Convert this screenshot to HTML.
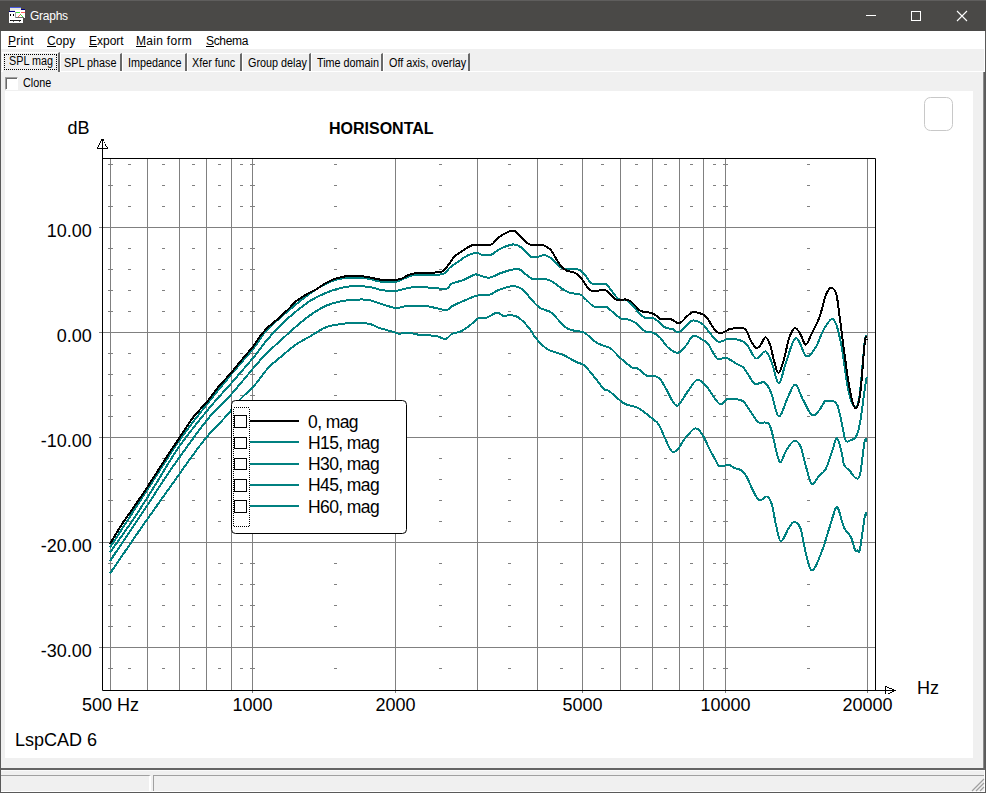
<!DOCTYPE html>
<html><head><meta charset="utf-8">
<style>
*{margin:0;padding:0;box-sizing:border-box}
html,body{width:986px;height:793px;overflow:hidden;background:#f0f0f0;font-family:"Liberation Sans",sans-serif;position:relative}
.a{position:absolute}
#title{left:0;top:0;width:986px;height:31px;background:#4a4947;border-top:1px solid #5f5e5d}
#title .t{left:30px;top:8px;color:#fff;font-size:12px;letter-spacing:-0.25px;line-height:14px}
#menu{left:1px;top:31px;width:984px;height:18px;background:#fff}
#menu span{position:absolute;top:3px;font-size:12px;line-height:14px;color:#000}
#menu u{text-decoration:none;border-bottom:1px solid #000;display:inline-block;line-height:10px}
.tab{position:absolute;font-size:12px;line-height:14px;color:#000;white-space:nowrap;transform:scaleX(0.9);transform-origin:0 0}
.tabb{position:absolute;background:#f0f0f0}
svg text{font-family:"Liberation Sans",sans-serif;fill:#000}
</style></head><body>
<div class="a" id="title">
  <svg class="a" style="left:0;top:-1px" width="30" height="30" shape-rendering="crispEdges"><rect x="10" y="7" width="11" height="1" fill="#4a5ae0"/><rect x="10" y="8" width="11" height="3" fill="#e6e6de"/><rect x="15" y="10" width="10" height="8" fill="#ffffff"/><rect x="21" y="9" width="4" height="1" fill="#000080"/><rect x="16" y="12" width="4" height="1" fill="#40e040"/><rect x="21" y="12" width="4" height="1" fill="#ff6060"/><rect x="18" y="16" width="1" height="1" fill="#ff6060"/><rect x="19" y="15" width="1" height="1" fill="#ff6060"/><rect x="20" y="14" width="1" height="1" fill="#a08040"/><rect x="21" y="15" width="1" height="1" fill="#40e040"/><rect x="22" y="16" width="1" height="1" fill="#40e040"/><rect x="16" y="17" width="8" height="1" fill="#707070"/><rect x="9" y="11" width="6" height="1" fill="#000080"/><rect x="9" y="12" width="7" height="11" fill="#ffffff"/><rect x="9" y="18" width="14" height="5" fill="#ffffff"/><rect x="15" y="12" width="1" height="6" fill="#a0a0a0"/><rect x="10" y="14" width="1" height="2" fill="#000"/><rect x="13" y="14" width="1" height="2" fill="#000"/><rect x="10" y="20" width="1" height="1" fill="#000"/><rect x="11" y="20" width="9" height="1" fill="#202020"/><rect x="20" y="20" width="1" height="1" fill="#000"/><rect x="13" y="21" width="1" height="1" fill="#606060"/><rect x="19" y="21" width="1" height="1" fill="#606060"/></svg>
  <div class="a t">Graphs</div>
  <div class="a" style="left:866px;top:14px;width:10px;height:1px;background:#fff"></div>
  <div class="a" style="left:911px;top:10px;width:10px;height:10px;border:1px solid #fff"></div>
  <svg class="a" style="left:956px;top:9px" width="12" height="12"><path d="M1 1L11 11M11 1L1 11" stroke="#fff" stroke-width="1.1"/></svg>
</div>
<div class="a" style="left:0;top:31px;width:1px;height:762px;background:#5a5a5a"></div>
<div class="a" style="left:985px;top:31px;width:1px;height:762px;background:#5a5a5a"></div>
<div class="a" style="left:983px;top:72px;width:2px;height:698px;background:#5e5e5e;border-left:1px solid #8a8a8a"></div>
<div class="a" style="left:984px;top:49px;width:1px;height:23px;background:#fff"></div>
<div class="a" id="menu">
  <span style="left:7px;letter-spacing:0.2px"><u>P</u>rint</span>
  <span style="left:46px;letter-spacing:0.1px"><u>C</u>opy</span>
  <span style="left:88px"><u>E</u>xport</span>
  <span style="left:135px;letter-spacing:0.3px"><u>M</u>ain form</span>
  <span style="left:205px;letter-spacing:-0.33px"><u>S</u>chema</span>
</div>
<!-- tabs -->
<div class="a" style="left:1px;top:71px;width:983px;height:1px;background:#fff"></div>
<div class="tabb" style="left:2px;top:52px;width:58px;height:20px;border-top:1px solid #fff;border-left:1px solid #fff;border-right:2px solid #696969"></div>
<div class="a" style="left:4px;top:54px;width:53px;height:16px;border:1px dotted #000"></div>
<div class="tab" style="left:9px;top:54px;letter-spacing:0px">SPL mag</div>
<div class="tabb" style="left:60px;top:53px;width:62px;height:18px;border-top:1px solid #fff;border-left:1px solid #fff;border-right:2px solid #696969"></div>
<div class="tab" style="left:64px;top:56px;letter-spacing:0px">SPL phase</div>
<div class="tabb" style="left:122px;top:53px;width:65px;height:18px;border-top:1px solid #fff;border-left:1px solid #fff;border-right:2px solid #696969"></div>
<div class="tab" style="left:128px;top:56px;letter-spacing:0px">Impedance</div>
<div class="tabb" style="left:187px;top:53px;width:55px;height:18px;border-top:1px solid #fff;border-left:1px solid #fff;border-right:2px solid #696969"></div>
<div class="tab" style="left:192px;top:56px;letter-spacing:0px">Xfer func</div>
<div class="tabb" style="left:242px;top:53px;width:69px;height:18px;border-top:1px solid #fff;border-left:1px solid #fff;border-right:2px solid #696969"></div>
<div class="tab" style="left:248px;top:56px;letter-spacing:0px">Group delay</div>
<div class="tabb" style="left:311px;top:53px;width:72px;height:18px;border-top:1px solid #fff;border-left:1px solid #fff;border-right:2px solid #696969"></div>
<div class="tab" style="left:317px;top:56px;letter-spacing:0px">Time domain</div>
<div class="tabb" style="left:383px;top:53px;width:87px;height:18px;border-top:1px solid #fff;border-left:1px solid #fff;border-right:2px solid #696969"></div>
<div class="tab" style="left:389px;top:56px;letter-spacing:0px">Off axis, overlay</div>

<!-- clone -->
<div class="a" style="left:5px;top:77px;width:13px;height:13px;background:#fff;border-top:1px solid #a0a0a0;border-left:1px solid #a0a0a0;border-right:1px solid #fff;border-bottom:1px solid #fff;box-shadow:inset 1px 1px 0 #696969"></div>
<div class="tab" style="left:23px;top:76px">Clone</div>
<!-- panel -->
<div class="a" style="left:5px;top:91px;width:968px;height:667px;background:#fff"></div>
<!-- status bar -->
<div class="a" style="left:1px;top:768px;width:984px;height:2px;background:#646464"></div>
<div class="a" style="left:1px;top:770px;width:984px;height:1px;background:#fafafa"></div><div class="a" style="left:984px;top:770px;width:1px;height:22px;background:#fff"></div>
<div class="a" style="left:1px;top:775px;width:150px;height:17px;border-top:1px solid #a0a0a0;border-right:2px solid #fff;"></div>
<div class="a" style="left:153px;top:775px;width:831px;height:17px;border-top:1px solid #a0a0a0;border-left:1px solid #a0a0a0"></div>
<div class="a" style="left:1px;top:791px;width:984px;height:1px;background:#fff"></div>
<div class="a" style="left:0;top:792px;width:986px;height:1px;background:#5a5a5a"></div>
<svg class="a" style="left:970px;top:777px" width="15" height="15"><path d="M14 2L2 14M14 6L6 14M14 10L10 14" stroke="#a0a0a0" stroke-width="1.2"/></svg>
<svg class="a" style="left:0;top:0" width="986" height="793">
<line x1="99" y1="227.5" x2="875" y2="227.5" stroke="#808080" stroke-width="1"/>
<line x1="99" y1="332.5" x2="875" y2="332.5" stroke="#808080" stroke-width="1"/>
<line x1="99" y1="437.5" x2="875" y2="437.5" stroke="#808080" stroke-width="1"/>
<line x1="99" y1="542.5" x2="875" y2="542.5" stroke="#808080" stroke-width="1"/>
<line x1="99" y1="647.5" x2="875" y2="647.5" stroke="#808080" stroke-width="1"/>
<line x1="110.5" y1="158" x2="110.5" y2="690" stroke="#808080" stroke-width="1"/>
<line x1="147.5" y1="158" x2="147.5" y2="690" stroke="#808080" stroke-width="1"/>
<line x1="179.5" y1="158" x2="179.5" y2="690" stroke="#808080" stroke-width="1"/>
<line x1="206.5" y1="158" x2="206.5" y2="690" stroke="#808080" stroke-width="1"/>
<line x1="231.5" y1="158" x2="231.5" y2="690" stroke="#808080" stroke-width="1"/>
<line x1="252.5" y1="158" x2="252.5" y2="693" stroke="#808080" stroke-width="1"/>
<line x1="395.5" y1="158" x2="395.5" y2="693" stroke="#808080" stroke-width="1"/>
<line x1="477.5" y1="158" x2="477.5" y2="690" stroke="#808080" stroke-width="1"/>
<line x1="537.5" y1="158" x2="537.5" y2="690" stroke="#808080" stroke-width="1"/>
<line x1="582.5" y1="158" x2="582.5" y2="693" stroke="#808080" stroke-width="1"/>
<line x1="620.5" y1="158" x2="620.5" y2="690" stroke="#808080" stroke-width="1"/>
<line x1="652.5" y1="158" x2="652.5" y2="690" stroke="#808080" stroke-width="1"/>
<line x1="679.5" y1="158" x2="679.5" y2="690" stroke="#808080" stroke-width="1"/>
<line x1="703.5" y1="158" x2="703.5" y2="690" stroke="#808080" stroke-width="1"/>
<line x1="725.5" y1="158" x2="725.5" y2="693" stroke="#808080" stroke-width="1"/>
<line x1="867.5" y1="158" x2="867.5" y2="693" stroke="#808080" stroke-width="1"/>
<path d="M108 164.5h5M108 185.5h5M108 206.5h5M108 248.5h5M108 269.5h5M108 290.5h5M108 311.5h5M108 353.5h5M108 374.5h5M108 395.5h5M108 416.5h5M108 458.5h5M108 479.5h5M108 500.5h5M108 521.5h5M108 563.5h5M108 584.5h5M108 605.5h5M108 626.5h5M108 668.5h5M128 164.5h3M128 185.5h3M128 206.5h3M128 248.5h3M128 269.5h3M128 290.5h3M128 311.5h3M128 353.5h3M128 374.5h3M128 395.5h3M128 416.5h3M128 458.5h3M128 479.5h3M128 500.5h3M128 521.5h3M128 563.5h3M128 584.5h3M128 605.5h3M128 626.5h3M128 668.5h3M162 164.5h3M162 185.5h3M162 206.5h3M162 248.5h3M162 269.5h3M162 290.5h3M162 311.5h3M162 353.5h3M162 374.5h3M162 395.5h3M162 416.5h3M162 458.5h3M162 479.5h3M162 500.5h3M162 521.5h3M162 563.5h3M162 584.5h3M162 605.5h3M162 626.5h3M162 668.5h3M192 164.5h3M192 185.5h3M192 206.5h3M192 248.5h3M192 269.5h3M192 290.5h3M192 311.5h3M192 353.5h3M192 374.5h3M192 395.5h3M192 416.5h3M192 458.5h3M192 479.5h3M192 500.5h3M192 521.5h3M192 563.5h3M192 584.5h3M192 605.5h3M192 626.5h3M192 668.5h3M218 164.5h3M218 185.5h3M218 206.5h3M218 248.5h3M218 269.5h3M218 290.5h3M218 311.5h3M218 353.5h3M218 374.5h3M218 395.5h3M218 416.5h3M218 458.5h3M218 479.5h3M218 500.5h3M218 521.5h3M218 563.5h3M218 584.5h3M218 605.5h3M218 626.5h3M218 668.5h3M240 164.5h3M240 185.5h3M240 206.5h3M240 248.5h3M240 269.5h3M240 290.5h3M240 311.5h3M240 353.5h3M240 374.5h3M240 395.5h3M240 416.5h3M240 458.5h3M240 479.5h3M240 500.5h3M240 521.5h3M240 563.5h3M240 584.5h3M240 605.5h3M240 626.5h3M240 668.5h3M250 164.5h5M250 185.5h5M250 206.5h5M250 248.5h5M250 269.5h5M250 290.5h5M250 311.5h5M250 353.5h5M250 374.5h5M250 395.5h5M250 416.5h5M250 458.5h5M250 479.5h5M250 500.5h5M250 521.5h5M250 563.5h5M250 584.5h5M250 605.5h5M250 626.5h5M250 668.5h5M334 164.5h3M334 185.5h3M334 206.5h3M334 248.5h3M334 269.5h3M334 290.5h3M334 311.5h3M334 353.5h3M334 374.5h3M334 395.5h3M334 416.5h3M334 458.5h3M334 479.5h3M334 500.5h3M334 521.5h3M334 563.5h3M334 584.5h3M334 605.5h3M334 626.5h3M334 668.5h3M439 164.5h3M439 185.5h3M439 206.5h3M439 248.5h3M439 269.5h3M439 290.5h3M439 311.5h3M439 353.5h3M439 374.5h3M439 395.5h3M439 416.5h3M439 458.5h3M439 479.5h3M439 500.5h3M439 521.5h3M439 563.5h3M439 584.5h3M439 605.5h3M439 626.5h3M439 668.5h3M508 164.5h3M508 185.5h3M508 206.5h3M508 248.5h3M508 269.5h3M508 290.5h3M508 311.5h3M508 353.5h3M508 374.5h3M508 395.5h3M508 416.5h3M508 458.5h3M508 479.5h3M508 500.5h3M508 521.5h3M508 563.5h3M508 584.5h3M508 605.5h3M508 626.5h3M508 668.5h3M560 164.5h3M560 185.5h3M560 206.5h3M560 248.5h3M560 269.5h3M560 290.5h3M560 311.5h3M560 353.5h3M560 374.5h3M560 395.5h3M560 416.5h3M560 458.5h3M560 479.5h3M560 500.5h3M560 521.5h3M560 563.5h3M560 584.5h3M560 605.5h3M560 626.5h3M560 668.5h3M601 164.5h3M601 185.5h3M601 206.5h3M601 248.5h3M601 269.5h3M601 290.5h3M601 311.5h3M601 353.5h3M601 374.5h3M601 395.5h3M601 416.5h3M601 458.5h3M601 479.5h3M601 500.5h3M601 521.5h3M601 563.5h3M601 584.5h3M601 605.5h3M601 626.5h3M601 668.5h3M635 164.5h3M635 185.5h3M635 206.5h3M635 248.5h3M635 269.5h3M635 290.5h3M635 311.5h3M635 353.5h3M635 374.5h3M635 395.5h3M635 416.5h3M635 458.5h3M635 479.5h3M635 500.5h3M635 521.5h3M635 563.5h3M635 584.5h3M635 605.5h3M635 626.5h3M635 668.5h3M664 164.5h3M664 185.5h3M664 206.5h3M664 248.5h3M664 269.5h3M664 290.5h3M664 311.5h3M664 353.5h3M664 374.5h3M664 395.5h3M664 416.5h3M664 458.5h3M664 479.5h3M664 500.5h3M664 521.5h3M664 563.5h3M664 584.5h3M664 605.5h3M664 626.5h3M664 668.5h3M690 164.5h3M690 185.5h3M690 206.5h3M690 248.5h3M690 269.5h3M690 290.5h3M690 311.5h3M690 353.5h3M690 374.5h3M690 395.5h3M690 416.5h3M690 458.5h3M690 479.5h3M690 500.5h3M690 521.5h3M690 563.5h3M690 584.5h3M690 605.5h3M690 626.5h3M690 668.5h3M713 164.5h3M713 185.5h3M713 206.5h3M713 248.5h3M713 269.5h3M713 290.5h3M713 311.5h3M713 353.5h3M713 374.5h3M713 395.5h3M713 416.5h3M713 458.5h3M713 479.5h3M713 500.5h3M713 521.5h3M713 563.5h3M713 584.5h3M713 605.5h3M713 626.5h3M713 668.5h3M723 164.5h5M723 185.5h5M723 206.5h5M723 248.5h5M723 269.5h5M723 290.5h5M723 311.5h5M723 353.5h5M723 374.5h5M723 395.5h5M723 416.5h5M723 458.5h5M723 479.5h5M723 500.5h5M723 521.5h5M723 563.5h5M723 584.5h5M723 605.5h5M723 626.5h5M723 668.5h5M807 164.5h3M807 185.5h3M807 206.5h3M807 248.5h3M807 269.5h3M807 290.5h3M807 311.5h3M807 353.5h3M807 374.5h3M807 395.5h3M807 416.5h3M807 458.5h3M807 479.5h3M807 500.5h3M807 521.5h3M807 563.5h3M807 584.5h3M807 605.5h3M807 626.5h3M807 668.5h3" stroke="#808080" stroke-width="1" fill="none"/>
<path d="M102.5 140V690.5H896 M102.5 158.5H875.5V690" stroke="#000" stroke-width="1" fill="none"/>
<path d="M97 148h11v1h-11ZM97 147h1v1h-1ZM98 145h1v2h-1ZM99 143h1v2h-1ZM100 141h1v2h-1ZM101 139h3v2h-3ZM104 142h1v1h-1ZM105 144h1v2h-1ZM106 146h1v1h-1ZM107 147h1v1h-1ZM885 686h1v8h-1ZM886 686h1v1h-1ZM887 687h2v1h-2ZM889 688h3v1h-3ZM892 689h2v3h-2ZM890 692h2v1h-2ZM888 693h2v1h-2Z" fill="#000"/>
<path d="M110.0 573.5 C113.6 568.2 125.3 551.1 131.5 542.0 C137.7 532.9 140.1 529.3 147.4 519.0 C154.7 508.7 168.0 490.1 175.2 480.0 C182.4 469.9 185.2 465.6 190.4 458.5 C195.6 451.4 200.4 444.6 206.5 437.3 C212.6 430.1 221.8 421.1 227.2 415.0 C232.6 408.9 234.5 405.6 239.1 400.5 C243.7 395.4 250.2 390.1 255.0 384.7 C259.9 379.3 264.0 372.5 268.2 367.9 C272.4 363.3 275.8 361.1 280.3 357.3 C284.8 353.5 290.4 348.4 295.4 344.9 C300.4 341.4 305.5 339.0 310.5 336.1 C315.5 333.2 320.6 329.4 325.6 327.4 C330.7 325.4 335.8 324.8 340.8 324.0 C345.8 323.2 350.9 322.9 355.7 322.9 C360.5 322.9 365.8 323.2 369.7 324.0 C373.6 324.8 375.4 326.6 379.3 327.9 C383.2 329.2 390.0 330.9 393.2 331.9 C396.4 332.8 395.9 333.4 398.6 333.6 C401.3 333.8 405.7 332.8 409.3 333.0 C412.9 333.2 415.5 334.4 420.0 334.9 C424.5 335.4 431.9 335.3 436.1 336.0 C440.4 336.7 442.8 339.5 445.5 339.1 C448.2 338.7 449.7 335.0 452.2 333.7 C454.7 332.4 457.9 332.8 460.7 331.5 C463.5 330.2 466.2 328.2 469.2 326.0 C472.2 323.8 476.1 319.5 478.9 318.1 C481.7 316.8 483.1 318.8 486.2 317.9 C489.2 317.0 494.3 312.9 497.2 312.6 C500.1 312.3 501.1 315.5 503.3 315.9 C505.5 316.3 508.2 314.9 510.6 315.1 C513.0 315.3 515.5 315.7 517.9 317.1 C520.3 318.5 523.0 321.3 525.2 323.6 C527.4 325.9 529.7 328.7 531.3 330.9 C532.9 333.1 532.9 334.5 534.9 337.0 C536.9 339.5 541.2 344.0 543.4 346.1 C545.6 348.2 546.4 348.8 548.3 349.8 C550.2 350.8 552.2 351.1 555.0 352.1 C557.8 353.1 561.2 354.1 564.8 355.7 C568.3 357.3 573.0 360.4 576.3 362.0 C579.6 363.6 581.5 363.1 584.5 365.6 C587.5 368.1 591.0 373.1 594.3 377.0 C597.6 380.9 601.7 387.0 604.2 389.3 C606.7 391.6 605.8 388.7 609.1 391.0 C612.4 393.3 619.2 400.6 623.9 403.3 C628.5 406.0 633.7 406.0 637.0 407.4 C640.3 408.8 641.3 409.9 643.5 411.5 C645.7 413.1 648.2 415.2 650.0 416.7 C651.8 418.1 652.7 418.9 654.1 420.2 C655.5 421.5 656.8 421.2 658.6 424.3 C660.5 427.4 663.2 434.3 665.2 438.5 C667.2 442.7 668.8 447.4 670.3 449.6 C671.8 451.8 672.8 452.3 674.3 451.9 C675.8 451.5 677.9 449.0 679.4 447.1 C680.9 445.2 682.0 442.6 683.5 440.5 C685.0 438.4 686.7 436.3 688.5 434.4 C690.3 432.4 692.4 429.6 694.1 428.8 C695.8 428.0 697.1 428.4 698.7 429.8 C700.3 431.2 701.9 433.7 703.8 437.0 C705.6 440.3 707.9 446.0 709.8 449.6 C711.6 453.2 713.4 456.1 714.9 458.8 C716.4 461.5 717.6 464.7 719.0 465.9 C720.4 467.1 721.3 466.1 723.0 465.9 C724.7 465.7 727.2 464.5 729.1 464.8 C731.0 465.1 732.2 467.0 734.2 467.9 C736.2 468.8 739.3 469.0 741.3 470.4 C743.3 471.8 744.8 473.7 746.3 476.0 C747.8 478.3 749.0 481.9 750.0 484.1 C751.0 486.3 751.2 486.8 752.5 489.4 C753.8 491.9 756.4 497.7 758.0 499.4 C759.6 501.1 760.7 499.9 762.2 499.4 C763.7 498.9 765.5 495.7 767.1 496.6 C768.7 497.5 770.4 499.9 771.9 504.7 C773.4 509.5 774.6 519.4 776.1 525.5 C777.6 531.6 778.8 540.9 780.9 541.4 C783.0 541.9 786.4 531.5 788.6 528.3 C790.8 525.1 792.1 522.0 794.1 522.0 C796.1 522.0 798.5 523.5 800.4 528.3 C802.2 533.0 803.6 543.8 805.2 550.5 C806.8 557.2 808.5 565.7 810.1 568.5 C811.7 571.3 812.7 571.0 814.9 567.5 C817.1 564.0 820.9 554.0 823.2 547.7 C825.5 541.4 826.7 536.3 828.8 529.7 C830.9 523.1 834.1 511.6 835.7 508.2 C837.3 504.8 837.1 506.3 838.5 509.5 C839.9 512.7 842.0 523.0 844.1 527.6 C846.2 532.2 849.2 533.6 851.0 537.3 C852.8 541.0 854.0 547.8 855.1 550.0 C856.2 552.2 856.8 550.7 857.6 550.5 C858.4 550.3 858.8 554.8 860.0 549.0 C861.2 543.2 863.8 521.5 864.9 515.8 C866.0 510.1 866.6 514.9 866.9 514.7" stroke="#008080" stroke-width="2" fill="none" stroke-linejoin="round" shape-rendering="crispEdges"/>
<path d="M110.0 561.0 C113.6 555.7 125.3 538.3 131.5 529.0 C137.7 519.7 142.3 513.0 147.4 505.3 C152.5 497.6 156.8 490.5 162.1 482.5 C167.4 474.5 171.6 468.2 179.3 457.5 C187.0 446.8 199.8 428.7 208.5 418.2 C217.2 407.7 223.4 403.1 231.2 394.4 C238.9 385.7 249.3 372.8 255.0 366.2 C260.6 359.6 260.9 359.2 265.1 355.0 C269.3 350.8 275.2 345.3 280.3 340.7 C285.4 336.1 290.4 331.4 295.4 327.1 C300.4 322.8 305.5 318.5 310.5 315.0 C315.5 311.5 320.6 308.2 325.6 305.9 C330.7 303.6 335.8 302.3 340.8 301.3 C345.8 300.3 351.1 299.9 355.7 299.7 C360.3 299.5 363.6 299.1 368.6 300.0 C373.6 300.9 381.1 304.1 385.7 305.4 C390.3 306.7 392.5 307.8 396.4 307.9 C400.3 307.9 404.6 306.0 409.3 305.7 C414.0 305.4 419.7 305.5 424.3 305.9 C428.9 306.3 434.1 307.7 437.2 308.3 C440.2 308.9 440.9 309.4 442.6 309.6 C444.3 309.8 445.9 310.2 447.6 309.6 C449.3 309.0 449.8 307.4 452.7 305.8 C455.6 304.2 461.3 301.9 465.3 300.2 C469.3 298.5 472.6 296.6 476.6 295.7 C480.6 294.8 485.6 295.8 489.2 294.9 C492.8 294.0 494.1 291.8 498.1 290.3 C502.1 288.8 509.0 286.0 513.2 286.0 C517.4 286.0 520.4 288.0 523.3 290.1 C526.2 292.2 528.1 296.0 530.8 298.9 C533.5 301.8 536.5 305.5 539.7 307.7 C542.9 309.9 547.5 310.4 550.0 311.8 C552.5 313.2 552.2 313.7 555.0 316.4 C557.8 319.1 563.2 325.5 566.5 327.9 C569.8 330.3 571.7 330.0 574.7 330.8 C577.7 331.6 581.0 330.9 584.5 332.8 C588.0 334.7 592.7 340.1 596.0 342.3 C599.3 344.5 601.8 344.9 604.2 345.9 C606.7 346.9 608.0 346.3 610.7 348.4 C613.4 350.4 617.1 355.0 620.6 358.2 C624.1 361.4 629.3 365.9 632.0 367.5 C634.7 369.1 634.5 366.6 637.0 368.0 C639.5 369.4 643.8 374.3 646.8 375.7 C649.8 377.1 652.8 375.6 655.0 376.2 C657.2 376.8 658.0 376.8 660.0 379.1 C662.0 381.4 664.8 386.5 666.9 390.2 C669.0 393.9 670.6 398.7 672.5 401.2 C674.4 403.7 675.5 407.0 678.0 405.4 C680.5 403.8 684.5 395.8 687.7 391.5 C690.9 387.2 694.1 380.5 697.4 379.8 C700.6 379.1 703.5 383.4 707.2 387.4 C710.9 391.4 716.1 402.1 719.6 404.0 C723.1 405.9 724.3 399.4 728.0 398.8 C731.7 398.2 738.7 399.4 741.8 400.6 C744.9 401.8 744.7 403.3 746.6 405.8 C748.5 408.3 751.2 412.9 753.2 415.7 C755.2 418.4 756.1 421.1 758.5 422.3 C760.9 423.5 765.5 421.6 767.7 423.0 C769.9 424.4 770.3 426.7 771.6 430.9 C772.9 435.1 774.2 442.7 775.6 448.0 C777.0 453.3 778.5 462.1 780.2 462.5 C782.0 462.9 783.8 454.2 786.1 450.6 C788.4 447.0 791.7 441.5 794.1 440.8 C796.5 440.1 798.6 442.4 800.6 446.7 C802.6 451.0 804.0 460.3 805.9 466.5 C807.8 472.7 809.7 482.4 811.9 483.9 C814.1 485.4 816.8 478.2 819.1 475.7 C821.4 473.2 823.5 473.3 825.7 469.1 C827.9 464.9 830.4 455.8 832.3 450.6 C834.2 445.4 835.4 437.9 836.9 438.1 C838.4 438.3 840.3 447.5 841.5 452.0 C842.7 456.5 842.9 462.0 844.2 465.1 C845.5 468.2 847.5 468.3 849.4 470.4 C851.3 472.5 853.6 477.0 855.4 477.7 C857.2 478.4 858.5 480.4 860.0 474.4 C861.5 468.3 863.4 447.0 864.6 441.4 C865.8 435.8 866.6 440.9 867.0 440.8" stroke="#008080" stroke-width="2" fill="none" stroke-linejoin="round" shape-rendering="crispEdges"/>
<path d="M110.0 552.5 C113.6 547.4 125.3 531.2 131.5 522.0 C137.7 512.8 143.1 504.2 147.4 497.5 C151.7 490.8 151.8 490.5 157.1 482.0 C162.4 473.5 170.7 458.6 179.3 446.4 C187.9 434.2 199.9 419.5 208.5 409.0 C217.1 398.5 223.2 392.4 231.0 383.5 C238.8 374.6 249.3 362.5 255.0 355.6 C260.7 348.7 260.9 347.2 265.1 342.2 C269.3 337.2 275.2 330.6 280.3 325.5 C285.4 320.4 290.4 316.0 295.4 311.9 C300.4 307.8 305.5 303.8 310.5 300.6 C315.5 297.5 320.6 295.1 325.6 293.0 C330.7 290.9 336.1 289.1 340.8 288.0 C345.5 286.9 348.6 286.2 353.6 286.1 C358.6 286.0 366.1 286.5 370.7 287.2 C375.3 287.9 377.3 289.5 381.4 290.1 C385.5 290.7 390.8 291.3 395.4 290.9 C400.0 290.5 405.2 288.4 409.3 287.7 C413.4 287.0 416.4 286.9 420.0 286.9 C423.6 286.9 426.3 287.4 430.7 287.7 C435.1 288.0 442.9 289.4 446.4 288.8 C449.8 288.2 448.7 285.2 451.4 283.8 C454.1 282.4 459.0 281.7 462.8 280.2 C466.6 278.7 471.6 275.8 474.1 274.9 C476.6 274.0 475.4 274.4 477.9 274.9 C480.4 275.4 485.4 278.1 489.2 277.8 C493.0 277.5 496.2 274.6 500.6 273.1 C505.0 271.6 512.3 269.4 515.7 268.9 C519.1 268.4 518.1 268.6 520.8 270.2 C523.5 271.8 528.1 277.2 532.1 278.7 C536.1 280.2 541.4 278.5 544.7 279.0 C548.0 279.5 549.1 279.9 551.9 281.5 C554.7 283.1 558.7 286.5 561.6 288.4 C564.5 290.2 566.2 291.6 569.3 292.6 C572.4 293.7 577.8 293.7 580.4 294.7 C583.0 295.7 582.9 296.8 585.2 298.8 C587.5 300.8 590.8 305.2 594.3 306.6 C597.8 308.0 603.4 306.3 606.0 306.9 C608.6 307.4 607.8 308.0 610.2 309.9 C612.6 311.8 617.5 316.8 620.6 318.4 C623.7 320.0 626.1 318.8 628.8 319.7 C631.5 320.6 634.3 321.8 637.0 323.8 C639.7 325.8 642.5 330.0 645.2 331.5 C647.9 333.0 650.9 331.8 653.4 332.8 C655.9 333.8 657.5 335.0 660.0 337.5 C662.5 340.0 665.3 345.3 668.3 347.8 C671.3 350.3 675.0 353.1 678.0 352.7 C681.0 352.2 683.9 347.9 686.4 345.1 C688.9 342.3 690.5 336.7 693.3 335.8 C696.1 334.9 700.5 338.6 703.0 340.0 C705.5 341.4 706.2 341.3 708.5 344.4 C710.8 347.4 713.9 356.0 716.9 358.3 C719.9 360.6 723.4 357.1 726.6 358.0 C729.8 358.9 733.5 362.2 736.3 363.8 C739.1 365.4 741.1 365.3 743.2 367.3 C745.3 369.3 746.8 372.8 748.8 375.6 C750.8 378.4 752.4 382.8 755.0 383.9 C757.6 385.0 761.9 381.0 764.6 382.5 C767.3 384.0 768.8 387.2 771.2 392.9 C773.6 398.6 776.1 415.6 778.8 416.5 C781.5 417.4 784.6 404.0 787.3 398.6 C790.0 393.2 792.7 384.4 795.2 384.4 C797.7 384.4 799.6 393.5 802.4 398.6 C805.2 403.7 809.1 413.0 811.9 415.0 C814.7 417.0 816.9 412.7 819.1 410.4 C821.3 408.1 823.3 402.7 825.0 401.2 C826.7 399.7 827.9 401.2 829.3 401.2 C830.7 401.2 832.2 400.4 833.6 401.2 C835.0 402.0 836.3 402.4 837.6 405.8 C838.9 409.2 840.2 415.9 841.5 421.6 C842.8 427.3 844.0 437.0 845.5 440.1 C847.0 443.2 849.0 440.7 850.7 440.1 C852.5 439.6 854.5 439.7 856.0 436.8 C857.5 433.9 858.6 430.8 860.0 423.0 C861.4 415.2 863.5 397.7 864.6 390.0 C865.7 382.3 866.4 379.2 866.7 377.0" stroke="#008080" stroke-width="2" fill="none" stroke-linejoin="round" shape-rendering="crispEdges"/>
<path d="M110.0 547.5 C116.2 537.9 135.8 507.6 147.4 489.6 C159.0 471.7 169.6 454.4 179.8 439.8 C190.0 425.2 199.9 413.2 208.5 402.3 C217.1 391.4 223.7 383.6 231.2 374.5 C238.7 365.4 247.8 355.4 253.7 348.0 C259.6 340.6 260.9 336.5 266.6 330.4 C272.3 324.3 281.0 317.0 287.8 311.2 C294.6 305.4 301.2 299.9 307.5 295.3 C313.8 290.8 320.1 286.7 325.6 283.9 C331.2 281.1 334.4 279.6 340.8 278.6 C347.2 277.6 357.5 277.6 364.3 278.1 C371.1 278.6 376.2 281.2 381.4 281.8 C386.6 282.4 391.5 282.4 395.4 281.8 C399.3 281.2 401.8 279.2 405.0 278.1 C408.2 277.0 409.5 275.5 414.7 274.9 C419.9 274.3 431.2 274.8 436.1 274.6 C441.0 274.4 441.5 274.9 443.9 273.7 C446.2 272.5 447.7 269.5 450.2 267.4 C452.7 265.3 456.1 263.1 459.0 261.1 C461.9 259.1 464.8 256.8 467.8 255.4 C470.9 254.0 475.0 253.0 477.3 252.9 C479.6 252.8 479.5 254.5 481.7 254.8 C483.9 255.2 487.4 256.0 490.5 255.0 C493.6 254.0 496.8 250.5 500.6 248.7 C504.4 246.9 509.8 244.7 513.2 244.4 C516.6 244.2 517.9 245.1 520.8 247.2 C523.7 249.2 527.9 255.1 530.8 256.7 C533.7 258.3 536.2 257.0 538.4 256.7 C540.6 256.4 542.1 254.8 544.1 255.0 C546.1 255.2 547.6 255.7 550.5 257.9 C553.4 260.1 558.4 266.1 561.6 268.0 C564.9 269.9 567.1 268.7 570.0 269.0 C572.9 269.3 576.5 268.7 579.0 269.7 C581.5 270.7 583.0 272.9 585.2 275.2 C587.4 277.5 589.0 282.2 592.2 283.6 C595.5 285.0 601.9 283.2 604.7 283.8 C607.5 284.4 606.5 284.4 608.8 287.0 C611.1 289.6 615.5 296.9 618.5 299.1 C621.5 301.3 624.4 298.9 626.9 300.2 C629.4 301.5 630.9 304.2 633.8 307.1 C636.7 310.0 641.0 315.6 644.2 317.5 C647.4 319.4 650.5 317.3 653.2 318.2 C655.9 319.1 658.2 321.5 660.2 323.1 C662.2 324.7 663.5 326.7 665.5 327.7 C667.5 328.7 670.2 328.4 672.5 329.1 C674.8 329.8 676.2 333.3 679.4 331.9 C682.6 330.5 688.2 322.2 691.9 320.8 C695.6 319.4 698.8 321.6 701.6 323.3 C704.4 325.0 705.7 328.1 708.5 331.2 C711.3 334.2 714.8 340.4 718.3 341.6 C721.8 342.8 725.4 338.7 729.3 338.6 C733.2 338.5 738.8 339.7 741.8 340.9 C744.8 342.1 745.2 342.7 747.6 345.6 C750.0 348.5 753.1 357.6 756.1 358.5 C759.1 359.4 762.8 350.4 765.5 351.3 C768.2 352.2 769.9 358.2 772.1 363.6 C774.3 369.0 776.6 383.2 778.8 383.4 C781.0 383.5 782.6 372.1 785.4 364.5 C788.2 356.9 792.3 339.5 795.8 338.1 C799.3 336.7 802.9 354.4 806.2 356.0 C809.5 357.6 812.8 351.8 815.6 347.5 C818.4 343.2 820.6 335.2 823.2 330.5 C825.8 325.8 828.9 320.4 831.1 319.5 C833.3 318.6 834.6 319.8 836.4 324.8 C838.2 329.8 840.2 339.0 842.1 349.4 C844.0 359.8 845.9 377.9 847.8 387.2 C849.7 396.5 851.5 403.3 853.4 405.2 C855.3 407.1 857.2 409.3 859.1 398.6 C861.0 387.9 863.5 350.8 864.8 340.9 C866.1 331.0 866.4 339.3 866.7 339.0" stroke="#008080" stroke-width="2" fill="none" stroke-linejoin="round" shape-rendering="crispEdges"/>
<path d="M110.0 544.0 C112.1 540.5 119.1 528.6 122.7 523.0 C126.3 517.4 127.4 516.6 131.5 510.6 C135.6 504.6 141.5 496.0 147.4 487.0 C153.3 478.0 161.4 465.1 166.8 456.8 C172.2 448.5 175.5 443.8 179.8 437.3 C184.1 430.8 187.9 424.2 192.7 418.0 C197.5 411.8 204.1 405.3 208.5 400.0 C212.9 394.7 215.4 390.5 219.2 386.0 C223.0 381.5 227.4 377.2 231.2 372.8 C235.0 368.4 238.3 363.9 242.1 359.4 C245.8 354.9 250.9 349.4 253.7 345.8 C256.5 342.2 257.0 340.5 259.1 337.6 C261.2 334.7 263.6 331.6 266.6 328.6 C269.6 325.6 273.7 322.6 277.2 319.5 C280.7 316.4 284.5 312.8 287.8 309.7 C291.1 306.6 293.6 303.2 296.9 300.6 C300.2 298.0 304.2 295.7 307.5 293.8 C310.8 291.9 313.6 291.0 316.6 289.2 C319.6 287.4 322.1 285.1 325.6 283.2 C329.1 281.3 333.0 279.1 337.7 277.9 C342.4 276.6 348.8 275.9 353.6 275.7 C358.4 275.5 362.8 276.3 366.4 276.8 C370.0 277.3 372.1 278.0 375.0 278.6 C377.9 279.2 380.7 279.9 383.6 280.2 C386.5 280.5 389.2 280.5 392.2 280.2 C395.2 279.9 398.9 279.5 401.8 278.6 C404.7 277.7 406.3 275.6 409.3 274.6 C412.3 273.6 415.3 273.1 420.0 272.7 C424.7 272.3 433.6 272.8 437.6 272.4 C441.6 272.0 441.8 272.2 443.9 270.5 C446.0 268.8 448.3 264.7 450.2 262.3 C452.1 259.9 452.7 258.2 455.2 256.0 C457.7 253.8 462.2 250.9 465.3 249.1 C468.4 247.2 469.3 245.6 473.5 244.9 C477.7 244.2 486.4 246.1 490.5 244.9 C494.6 243.7 495.2 240.0 498.1 237.8 C501.1 235.6 505.6 233.0 508.2 231.8 C510.8 230.6 512.1 230.4 513.8 230.8 C515.5 231.2 515.6 231.7 518.2 234.0 C520.8 236.3 525.6 242.6 529.6 244.4 C533.6 246.2 538.7 244.0 542.2 244.9 C545.7 245.8 548.2 247.3 550.5 249.6 C552.8 251.9 554.2 255.7 556.1 258.6 C558.0 261.5 559.8 264.9 561.6 266.9 C563.5 268.9 565.0 269.8 567.2 270.8 C569.4 271.8 572.5 271.5 574.8 272.7 C577.1 273.9 579.1 275.7 581.1 278.0 C583.1 280.3 584.9 284.2 586.6 286.3 C588.3 288.4 589.6 290.1 591.5 290.8 C593.4 291.6 595.7 291.0 597.7 290.8 C599.7 290.6 601.7 289.7 603.3 289.8 C604.9 289.9 605.3 289.6 607.4 291.2 C609.5 292.8 612.8 298.1 615.8 299.5 C618.8 300.9 623.0 299.1 625.5 299.5 C628.0 299.9 628.7 299.9 631.0 301.6 C633.3 303.3 637.3 308.2 639.3 309.9 C641.3 311.6 640.9 311.1 642.8 311.6 C644.6 312.1 648.2 312.1 650.4 312.7 C652.6 313.3 654.1 314.4 656.0 315.5 C657.9 316.6 659.2 318.9 661.5 319.4 C663.8 319.9 667.2 318.2 669.7 318.7 C672.2 319.2 674.8 321.9 676.6 322.5 C678.5 323.1 678.2 324.2 680.8 322.5 C683.3 320.8 688.4 313.9 691.9 312.5 C695.4 311.1 699.0 313.0 701.6 313.9 C704.2 314.8 705.4 315.8 707.2 318.0 C709.1 320.2 710.9 324.6 712.7 327.0 C714.6 329.4 716.4 331.7 718.3 332.6 C720.1 333.5 721.7 332.8 723.8 332.2 C725.9 331.6 727.2 329.4 730.7 328.8 C734.2 328.2 741.3 326.9 744.6 328.8 C747.9 330.7 748.5 336.8 750.4 340.0 C752.3 343.2 754.4 347.3 756.1 348.1 C757.8 348.9 759.2 346.5 760.8 344.7 C762.4 342.9 763.9 337.0 765.5 337.1 C767.1 337.2 768.9 341.7 770.3 345.6 C771.7 349.6 772.6 356.2 774.0 360.8 C775.4 365.4 776.8 373.0 778.4 373.0 C780.0 373.0 781.7 366.6 783.5 360.8 C785.3 355.0 787.3 343.6 789.2 338.1 C791.1 332.6 792.9 328.6 794.8 328.0 C796.7 327.4 798.7 331.5 800.5 334.3 C802.3 337.1 803.9 344.9 805.8 344.7 C807.7 344.5 809.5 337.9 811.8 333.3 C814.1 328.7 817.0 323.8 819.4 317.3 C821.8 310.9 824.0 299.5 826.0 294.6 C828.0 289.7 829.4 288.0 831.1 288.0 C832.8 288.0 834.9 289.1 836.4 294.6 C837.9 300.1 838.8 310.6 840.2 321.0 C841.6 331.4 843.3 345.6 844.9 357.0 C846.5 368.4 848.0 380.6 849.7 389.1 C851.4 397.6 853.3 407.1 855.0 408.0 C856.7 408.9 858.5 405.8 860.1 394.8 C861.7 383.8 863.7 351.1 864.8 341.8 C865.9 332.5 866.4 339.5 866.7 339.0" stroke="#000000" stroke-width="2" fill="none" stroke-linejoin="round" shape-rendering="crispEdges"/>
<rect x="231.5" y="400.5" width="175" height="133" rx="4" ry="4" fill="#fff" stroke="#000" stroke-width="1"/>
<path d="M234 407.5h1M234 526.5h1M236 407.5h1M236 526.5h1M238 407.5h1M238 526.5h1M240 407.5h1M240 526.5h1M242 407.5h1M242 526.5h1M244 407.5h1M244 526.5h1M246 407.5h1M246 526.5h1M248 407.5h1M248 526.5h1M233 409.5h1M249 409.5h1M233 411.5h1M249 411.5h1M233 413.5h1M249 413.5h1M233 415.5h1M249 415.5h1M233 417.5h1M249 417.5h1M233 419.5h1M249 419.5h1M233 421.5h1M249 421.5h1M233 423.5h1M249 423.5h1M233 425.5h1M249 425.5h1M233 427.5h1M249 427.5h1M233 429.5h1M249 429.5h1M233 431.5h1M249 431.5h1M233 433.5h1M249 433.5h1M233 435.5h1M249 435.5h1M233 437.5h1M249 437.5h1M233 439.5h1M249 439.5h1M233 441.5h1M249 441.5h1M233 443.5h1M249 443.5h1M233 445.5h1M249 445.5h1M233 447.5h1M249 447.5h1M233 449.5h1M249 449.5h1M233 451.5h1M249 451.5h1M233 453.5h1M249 453.5h1M233 455.5h1M249 455.5h1M233 457.5h1M249 457.5h1M233 459.5h1M249 459.5h1M233 461.5h1M249 461.5h1M233 463.5h1M249 463.5h1M233 465.5h1M249 465.5h1M233 467.5h1M249 467.5h1M233 469.5h1M249 469.5h1M233 471.5h1M249 471.5h1M233 473.5h1M249 473.5h1M233 475.5h1M249 475.5h1M233 477.5h1M249 477.5h1M233 479.5h1M249 479.5h1M233 481.5h1M249 481.5h1M233 483.5h1M249 483.5h1M233 485.5h1M249 485.5h1M233 487.5h1M249 487.5h1M233 489.5h1M249 489.5h1M233 491.5h1M249 491.5h1M233 493.5h1M249 493.5h1M233 495.5h1M249 495.5h1M233 497.5h1M249 497.5h1M233 499.5h1M249 499.5h1M233 501.5h1M249 501.5h1M233 503.5h1M249 503.5h1M233 505.5h1M249 505.5h1M233 507.5h1M249 507.5h1M233 509.5h1M249 509.5h1M233 511.5h1M249 511.5h1M233 513.5h1M249 513.5h1M233 515.5h1M249 515.5h1M233 517.5h1M249 517.5h1M233 519.5h1M249 519.5h1M233 521.5h1M249 521.5h1M233 523.5h1M249 523.5h1M233 525.5h1M249 525.5h1" stroke="#000" stroke-width="1" fill="none"/>
<rect x="234.5" y="415.5" width="12" height="12" fill="none" stroke="#000" stroke-width="1"/>
<rect x="250" y="420" width="49" height="2" fill="#000"/>
<text x="308" y="427.5" font-size="17.5" letter-spacing="-0.6">0, mag</text>
<rect x="234.5" y="437.5" width="12" height="11" fill="none" stroke="#000" stroke-width="1"/>
<rect x="250" y="441" width="49" height="2" fill="#008080"/>
<text x="308" y="448.5" font-size="17.5" letter-spacing="-0.6">H15, mag</text>
<rect x="234.5" y="458.5" width="12" height="11" fill="none" stroke="#000" stroke-width="1"/>
<rect x="250" y="463" width="49" height="2" fill="#008080"/>
<text x="308" y="469.5" font-size="17.5" letter-spacing="-0.6">H30, mag</text>
<rect x="234.5" y="479.5" width="12" height="12" fill="none" stroke="#000" stroke-width="1"/>
<rect x="250" y="484" width="49" height="2" fill="#008080"/>
<text x="308" y="490.5" font-size="17.5" letter-spacing="-0.6">H45, mag</text>
<rect x="234.5" y="500.5" width="12" height="12" fill="none" stroke="#000" stroke-width="1"/>
<rect x="250" y="505" width="49" height="2" fill="#008080"/>
<text x="308" y="512.5" font-size="17.5" letter-spacing="-0.6">H60, mag</text>
<text x="91.8" y="237" text-anchor="end" font-size="18">10.00</text>
<text x="91.8" y="342" text-anchor="end" font-size="18">0.00</text>
<text x="91.8" y="447" text-anchor="end" font-size="18">-10.00</text>
<text x="91.8" y="552" text-anchor="end" font-size="18">-20.00</text>
<text x="91.8" y="657" text-anchor="end" font-size="18">-30.00</text>
<text x="110.5" y="711" text-anchor="middle" font-size="18">500 Hz</text>
<text x="252.5" y="711" text-anchor="middle" font-size="18">1000</text>
<text x="395.5" y="711" text-anchor="middle" font-size="18">2000</text>
<text x="582.5" y="711" text-anchor="middle" font-size="18">5000</text>
<text x="725.5" y="711" text-anchor="middle" font-size="18">10000</text>
<text x="867.5" y="711" text-anchor="middle" font-size="18">20000</text>
<text x="67.5" y="134" font-size="18">dB</text>
<text x="917" y="694" font-size="18">Hz</text>
<text x="329" y="134" font-size="16" font-weight="bold">HORISONTAL</text>
<text x="15" y="746" font-size="18">LspCAD 6</text>
<rect x="924.5" y="97.5" width="28" height="33" rx="6" ry="6" fill="none" stroke="#c8c8c8" stroke-width="1"/>
</svg>
</body></html>
